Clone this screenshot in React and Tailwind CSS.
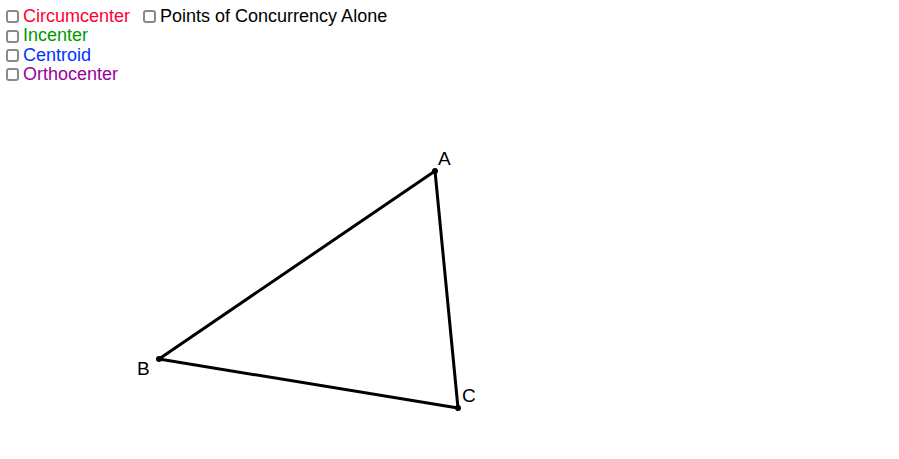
const OPTIONS = [
  { label: 'Circumcenter', color: 'text-[#ff0033]' },
  { label: 'Incenter', color: 'text-[#009900]' },
  { label: 'Centroid', color: 'text-[#0033ff]' },
  { label: 'Orthocenter', color: 'text-[#990099]' },
]

function Box() {
  return (
    <span className="inline-block w-[13px] h-[13px] shrink-0 rounded-[3px] border-2 border-[#8a8a8a] bg-white" />
  )
}

function Option({ label, color }) {
  return (
    <label className="flex items-center h-[19.4px] gap-[4px] cursor-pointer">
      <Box />
      <span className={color}>{label}</span>
    </label>
  )
}

export default function App() {
  return (
    <div className="relative w-[899px] h-[459px] bg-white overflow-hidden font-['Liberation_Sans',Arial,sans-serif] text-[18px] leading-[19.4px]">
      {/* drawing pad */}
      <svg className="absolute inset-0" width="899" height="459" viewBox="0 0 899 459">
        <g stroke="#000" strokeWidth="3" strokeLinecap="round" fill="none">
          <line x1="435" y1="171" x2="159" y2="359" />
          <line x1="159" y1="359" x2="458" y2="408" />
          <line x1="458" y1="408" x2="435" y2="171" />
        </g>
        <g fill="#000">
          <circle cx="435" cy="171" r="3" />
          <circle cx="159" cy="359" r="3" />
          <circle cx="458" cy="408" r="3" />
        </g>
        <g fontFamily="'Liberation Sans', Arial, sans-serif" fontSize="19" fill="#000">
          <text x="438" y="165">A</text>
          <text x="137" y="375">B</text>
          <text x="462" y="402">C</text>
        </g>
      </svg>

      {/* controls */}
      <div className="relative flex items-start gap-[13px] pl-[6px] pt-[7px]">
        <div className="flex flex-col">
          {OPTIONS.map((o) => (
            <Option key={o.label} {...o} />
          ))}
        </div>
        <Option label="Points of Concurrency Alone" color="text-black" />
      </div>
    </div>
  )
}
